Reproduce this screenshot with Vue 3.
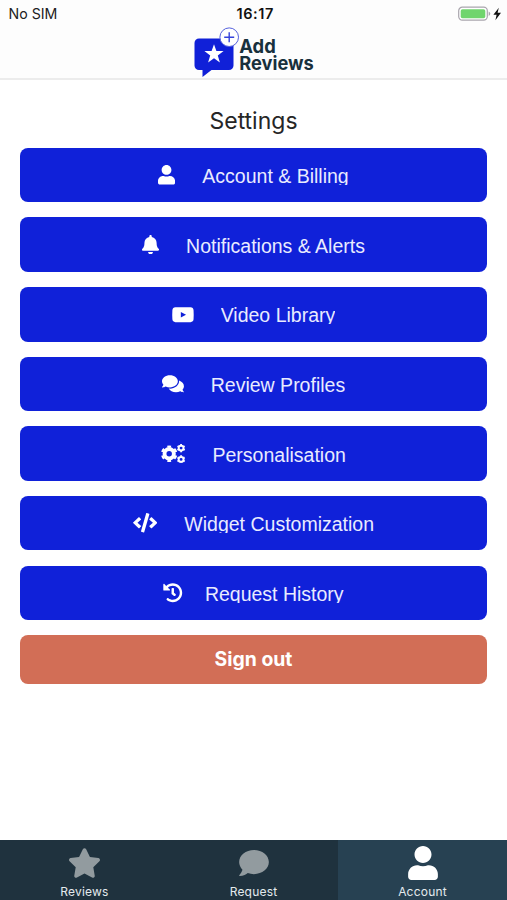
<script setup>
import { ref } from 'vue';

const abaAtiva = ref('Account');

const opcoes = [
  {
    nome: 'Account & Billing',
    icone: 'user',
    caixa: '0 0 448 512',
    path: 'M224 256c70.7 0 128-57.3 128-128S294.7 0 224 0 96 57.3 96 128s57.3 128 128 128zm89.6 32h-16.7c-22.2 10.2-46.9 16-72.9 16s-50.6-5.8-72.9-16h-16.7C60.2 288 0 348.2 0 422.4V464c0 26.5 21.5 48 48 48h352c26.5 0 48-21.5 48-48v-41.6c0-74.2-60.2-134.4-134.4-134.4z'
  },
  {
    nome: 'Notifications & Alerts',
    icone: 'bell',
    caixa: '0 0 448 512',
    path: 'M224 512c35.32 0 63.97-28.65 63.97-64H160.03c0 35.35 28.65 64 63.97 64zm215.39-149.71c-19.32-20.76-55.47-51.99-55.47-154.29 0-77.7-54.48-139.9-127.94-155.16V32c0-17.67-14.32-32-31.98-32s-31.98 14.33-31.98 32v20.84C118.56 68.1 64.08 130.3 64.08 208c0 102.3-36.15 133.53-55.47 154.29-6 6.45-8.66 14.16-8.61 21.71.11 16.4 12.98 32 32.1 32h383.8c19.12 0 32-15.6 32.1-32 .05-7.55-2.61-15.27-8.61-21.71z'
  },
  {
    nome: 'Video Library',
    icone: 'video',
    caixa: '0 0 576 512',
    path: 'M90 62Q288 52 486 62Q560 66 566 136Q574 256 566 376Q560 446 486 450Q288 460 90 450Q16 446 10 376Q2 256 10 136Q16 66 90 62zM232 182v148l136-74z'
  },
  {
    nome: 'Review Profiles',
    icone: 'comments',
    caixa: '0 0 576 512',
    path: 'M416 192c0-88.4-93.1-160-208-160S0 103.6 0 192c0 34.3 14.1 65.9 38 92-13.4 30.2-35.5 54.2-35.8 54.5-2.2 2.3-2.8 5.7-1.5 8.7S4.8 352 8 352c36.6 0 66.9-12.3 88.7-25 32.2 15.7 70.3 25 111.3 25 114.9 0 208-71.6 208-160zm122 220c23.9-26 38-57.7 38-92 0-66.9-53.5-124.2-129.3-148.1.9 6.6 1.3 13.3 1.3 20.1 0 105.9-107.7 192-240 192-10.8 0-21.3-.8-31.7-1.9C207.8 439.6 281.8 480 368 480c41 0 79.1-9.2 111.3-25 21.8 12.7 52.1 25 88.7 25 3.2 0 6.1-1.9 7.3-4.8 1.3-2.9.7-6.3-1.5-8.7-.3-.3-22.4-24.2-35.8-54.5z'
  },
  { nome: 'Personalisation', icone: 'cogs', caixa: '0 0 25 20' },
  {
    nome: 'Widget Customization',
    icone: 'code',
    caixa: '0 0 640 512',
    path: 'M278.9 511.5l-61-17.7c-6.4-1.8-10-8.5-8.2-14.9L346.2 8.7c1.8-6.4 8.5-10 14.9-8.2l61 17.7c6.4 1.8 10 8.5 8.2 14.9L293.8 503.3c-1.9 6.4-8.5 10.1-14.9 8.2zm-114-112.2l43.5-46.4c4.6-4.9 4.3-12.7-.8-17.2L117 256l90.6-79.7c5.1-4.5 5.5-12.3.8-17.2l-43.5-46.4c-4.5-4.8-12.1-5.1-17-.5L3.8 247.2c-5.1 4.7-5.1 12.8 0 17.5l144.1 135.1c4.9 4.6 12.5 4.4 17-.5zm327.2.6l144.1-135.1c5.1-4.7 5.1-12.8 0-17.5L492.1 112.1c-4.8-4.5-12.4-4.3-17 .5L431.6 159c-4.6 4.9-4.3 12.7.8 17.2L523 256l-90.6 79.7c-5.1 4.5-5.5 12.3-.8 17.2l43.5 46.4c4.5 4.9 12.1 5.1 17 .6z'
  },
  {
    nome: 'Request History',
    icone: 'history',
    caixa: '0 0 512 512',
    path: 'M504 255.531c.253 136.64-111.18 248.372-247.82 248.468-59.015.042-113.223-20.53-155.822-54.911-11.077-8.94-11.905-25.541-1.839-35.607l11.267-11.267c8.609-8.609 22.353-9.551 31.891-1.984C173.062 425.135 212.781 440 256 440c101.705 0 184-82.311 184-184 0-101.705-82.311-184-184-184-48.814 0-93.149 18.969-126.068 49.932l50.754 50.754c10.08 10.08 2.941 27.314-11.313 27.314H24c-8.837 0-16-7.163-16-16V38.627c0-14.254 17.234-21.393 27.314-11.314l49.372 49.372C129.209 34.136 189.552 8 256 8c136.81 0 247.747 110.78 248 247.531zm-180.912 78.784l9.823-12.63c8.138-10.463 6.253-25.542-4.21-33.679L288 256.349V152c0-13.255-10.745-24-24-24h-16c-13.255 0-24 10.745-24 24v135.651l65.409 50.874c10.463 8.137 25.541 6.253 33.679-4.21z'
  }
];

const engrenagens = [
  { x: 8.4, y: 10, anel: 4.8, traco: 4, dentes: 7.4, borda: 2.2 },
  { x: 20.6, y: 4.2, anel: 2.5, traco: 2, dentes: 3.7, borda: 1.2 },
  { x: 20.6, y: 15.8, anel: 2.5, traco: 2, dentes: 3.7, borda: 1.2 }
];

const abas = [
  {
    nome: 'Reviews',
    icone: 'star',
    caixa: '20 0 536 512',
    path: 'M259.3 17.8L194 150.2 47.9 171.5c-26.2 3.8-36.7 36.1-17.7 54.6l105.7 103-25 145.5c-4.5 26.3 23.2 46 46.4 33.7L288 439.6l130.7 68.7c23.2 12.2 50.9-7.4 46.4-33.7l-25-145.5 105.7-103c19-18.5 8.5-50.8-17.7-54.6L382 150.2 316.7 17.8c-11.7-23.6-45.6-23.9-57.4 0z'
  },
  {
    nome: 'Request',
    icone: 'comment',
    caixa: '0 32 512 448',
    path: 'M256 32C114.6 32 0 125.1 0 240c0 49.6 21.4 95 57 130.7C44.5 421.1 2.7 466 2.2 466.5c-2.2 2.3-2.8 5.7-1.5 8.7S4.8 480 8 480c66.3 0 116-31.8 140.6-51.4 32.7 12.3 69 19.4 107.4 19.4 141.4 0 256-93.1 256-208S397.4 32 256 32z'
  },
  { nome: 'Account', icone: 'account', caixa: '0 0 448 512', path: opcoes[0].path }
];
</script>

<template>
  <div class="app">
    <header class="topo">
      <div class="status">
        <span class="operadora">No SIM</span>
        <span class="hora">16:17</span>
        <svg class="bateria" viewBox="0 0 44 16">
          <rect x=".7" y="1.2" width="28.6" height="13" rx="3.6" fill="#fff" stroke="#a9a5ad" stroke-width="1.2" />
          <rect x="2.7" y="3.2" width="24.6" height="9" rx="1.8" fill="#70d56d" />
          <path d="M30.7 5.6q1.6.7 1.6 2.2t-1.6 2.2z" fill="#a9a5ad" />
          <path d="M40.8 1.8L35.4 8.8h3.2L37.4 14.2l5.6-7.4h-3.4z" fill="#111" />
        </svg>
      </div>
      <svg class="logo" viewBox="0 0 122 52">
        <path d="M5 11.5h30a4.5 4.5 0 0 1 4.5 4.5v22.5a4.5 4.5 0 0 1-4.5 4.5H17.5L8.5 50v-7H5A4.5 4.5 0 0 1 .5 38.5V16A4.5 4.5 0 0 1 5 11.5z" fill="#1020d8" />
        <path d="M20 17.2l2.4 6.8 7.2.1-5.8 4.4 2.1 7-5.9-4.2-5.9 4.2 2.1-7-5.8-4.4 7.2-.1z" fill="#fff" />
        <circle cx="35.2" cy="10.2" r="9.3" fill="#fff" stroke="#5460dc" stroke-width="1" />
        <path d="M35.2 5.2v10M30.2 10.2h10" stroke="#3442dc" stroke-width="1.4" />
        <text x="45.3" y="25.5" textLength="36.5" lengthAdjust="spacingAndGlyphs">Add</text>
        <text x="45.3" y="42.5" textLength="74.5" lengthAdjust="spacingAndGlyphs">Reviews</text>
      </svg>
    </header>

    <main class="conteudo">
      <h1>Settings</h1>
      <div class="lista">
        <button v-for="opcao in opcoes" :key="opcao.nome" class="opcao" :class="`opcao--${opcao.icone}`">
          <svg class="opcao__icone" :viewBox="opcao.caixa">
            <path v-if="opcao.path" :d="opcao.path" fill="#fff" fill-rule="evenodd" />
            <g v-else fill="none" stroke="#fff">
              <template v-for="(e, i) in engrenagens" :key="i">
                <circle :cx="e.x" :cy="e.y" :r="e.anel" :stroke-width="e.traco" />
                <circle :cx="e.x" :cy="e.y" :r="e.dentes" :stroke-width="e.borda" pathLength="12" stroke-dasharray="1 1" stroke-dashoffset="-.5" />
              </template>
            </g>
          </svg>
          <span class="opcao__nome">{{ opcao.nome }}</span>
        </button>
        <button class="sair">Sign out</button>
      </div>
    </main>

    <nav class="abas">
      <button
        v-for="aba in abas"
        :key="aba.nome"
        class="aba"
        :class="{ 'aba--ativa': aba.nome === abaAtiva }"
        @click="abaAtiva = aba.nome"
      >
        <span class="aba__icone">
          <svg :class="aba.icone" :viewBox="aba.caixa"><path :d="aba.path" fill="currentColor" /></svg>
        </span>
        <span class="aba__nome">{{ aba.nome }}</span>
      </button>
    </nav>
  </div>
</template>

<style>
body {
  margin: 0;
}
</style>

<style scoped>
.app {
  height: 900px;
  display: flex;
  flex-direction: column;
  overflow: hidden;
  background: #fff;
  font-family: Inter, "Liberation Sans", sans-serif;
}

button {
  border: 0;
  padding: 0;
  font-family: inherit;
  cursor: pointer;
}

.topo {
  box-sizing: border-box;
  height: 80px;
  flex: none;
  background: #fdfdfd;
  border-bottom: 2px solid #ececec;
}

.status {
  display: grid;
  grid-template-columns: 1fr auto 1fr;
  align-items: center;
  height: 27px;
  padding: 0 5px 0 8.5px;
  font-size: 14.2px;
  color: #222;
}

.hora {
  font-weight: 600;
  font-size: 14.5px;
  letter-spacing: .6px;
  color: #111;
}

.bateria {
  width: 44px;
  height: 16px;
  justify-self: end;
}

.logo {
  display: block;
  width: 122px;
  height: 52px;
  margin: 0 auto;
  transform: translateX(1px);
}

.logo text {
  font-family: Inter, sans-serif;
  font-size: 18.8px;
  font-weight: 700;
  fill: #18303c;
}

.conteudo {
  flex: 1;
  padding: 0 20px;
}

h1 {
  margin: 0;
  padding-top: 26px;
  height: 41.7px;
  line-height: 30px;
  text-align: center;
  font-size: 23px;
  font-weight: 400;
  color: #262626;
}

.lista {
  display: flex;
  flex-direction: column;
  gap: 15.05px;
}

.opcao {
  display: flex;
  align-items: center;
  justify-content: center;
  gap: 27px;
  height: 54.6px;
  border-radius: 8px;
  background: #1021d9;
  color: #e9ebff;
}

.opcao--history {
  gap: 22px;
}

.opcao__icone {
  height: 19.5px;
  flex: none;
}

/* the label box is shorter than the glyphs, so descenders get cut */
.opcao__nome {
  height: 19px;
  padding-top: 1px;
  line-height: 20px;
  overflow: hidden;
  font-family: "Liberation Sans", sans-serif;
  font-size: 19.5px;
  white-space: nowrap;
}

.sair {
  height: 48.6px;
  border-radius: 8px;
  background: #d26e56;
  color: #fff;
  font-size: 19.4px;
  font-weight: 700;
}

.abas {
  display: grid;
  grid-template-columns: repeat(3, 1fr);
  height: 60px;
  flex: none;
  background: #1f323e;
}

.aba {
  display: flex;
  flex-direction: column;
  align-items: center;
  background: none;
  color: #929b9f;
}

.aba--ativa {
  background: #274152;
  color: #fff;
}

.aba__icone {
  display: flex;
  align-items: center;
  height: 44px;
  padding-top: 1px;
  margin-bottom: 1px;
}

.aba__icone svg {
  display: block;
}

.star {
  width: 31px;
  height: 30px;
}

.comment {
  width: 30px;
  height: 26px;
}

.account {
  width: 30px;
  height: 34px;
}

.aba__nome {
  font-size: 12px;
  line-height: 12px;
  letter-spacing: .2px;
  color: #e4eaed;
}
</style>
